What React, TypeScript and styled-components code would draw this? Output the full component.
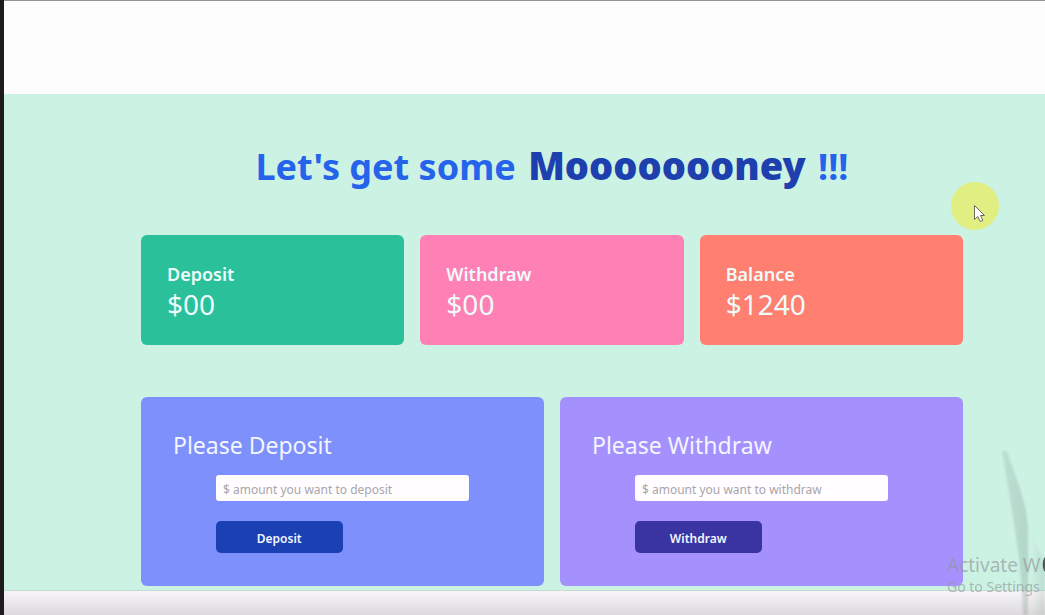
import React, { useState } from "react";
import styled, { createGlobalStyle } from "styled-components";

const GlobalStyle = createGlobalStyle`
  *, *::before, *::after { box-sizing: border-box; }
  body {
    margin: 0;
    font-family: "Noto Sans", "Open Sans", sans-serif;
    background: #fefdfe;
  }
`;

const Page = styled.div`
  position: relative;
  display: flex;
  flex-direction: column;
  min-height: 100vh;
  overflow: hidden;
  border-left: 4px solid #1c1c1c;
`;

const TopBar = styled.header`
  height: 94px;
  background: #fefdfe;
  border-top: 1px solid #959395;
`;

const Main = styled.main`
  padding: 45px 82px 4px 137px;
  background: #ccf2e4;
`;

const Title = styled.h1`
  height: 52px;
  margin: 0;
  font-size: 36px;
  line-height: 52px;
  font-weight: 700;
  text-align: center;
  white-space: nowrap;
  color: #2563eb;
`;

const Strong = styled.span`
  margin: 0 3px;
  font-size: 38px;
  font-weight: 900;
  color: #1e40af;
`;

const Cards = styled.section`
  display: grid;
  grid-template-columns: repeat(3, 1fr);
  gap: 16px;
  margin-top: 44px;
`;

const Card = styled.article<{ $color: string }>`
  height: 110px;
  padding: 25px 26px;
  border-radius: 6px;
  background: ${(p) => p.$color};
  color: #effbfb;
`;

const CardLabel = styled.h2`
  margin: 0;
  font-size: 18px;
  line-height: 28px;
  font-weight: 600;
`;

const CardValue = styled.p`
  margin: 0;
  font-size: 28px;
  line-height: 32px;
  font-weight: 400;
`;

const Panels = styled.section`
  display: grid;
  grid-template-columns: repeat(2, 1fr);
  gap: 16px;
  margin-top: 52px;
`;

const Panel = styled.article<{ $color: string }>`
  height: 189px;
  padding: 32px;
  border-radius: 6px;
  background: ${(p) => p.$color};
`;

const PanelTitle = styled.h2`
  margin: 0;
  font-size: 23px;
  line-height: 32px;
  font-weight: 400;
  color: #f3f5ff;
`;

const Form = styled.form`
  display: flex;
  flex-direction: column;
  align-items: flex-start;
  gap: 20px;
  margin: 14px 43px 0;
`;

const Amount = styled.input`
  width: 100%;
  height: 26px;
  padding: 2px 7px 0;
  border: 0;
  border-radius: 3px;
  background: #fffdff;
  font: 400 12px/20px "Noto Sans", sans-serif;
  color: #333;

  &::placeholder {
    color: #a9a5a9;
    opacity: 1;
  }
`;

const Submit = styled.button<{ $color: string }>`
  width: 50%;
  height: 32px;
  padding: 3px 0 0;
  border: 0;
  border-radius: 5px;
  background: ${(p) => p.$color};
  font: 600 12px/20px "Noto Sans", sans-serif;
  color: #f3f7ff;
  cursor: pointer;
`;

const Footer = styled.footer`
  flex: 1;
  min-height: 25px;
  border-top: 1px solid #c3dcd2;
  background: linear-gradient(#f7f5f7, #dbd9db);
`;

const Pointer = styled.svg`
  position: absolute;
  top: 181px;
  right: 45px;
  width: 50px;
  height: 50px;
  pointer-events: none;
`;

const Curve = styled.svg`
  position: absolute;
  right: 0;
  bottom: 0;
  width: 50px;
  height: 165px;
  pointer-events: none;
`;

const Watermark = styled.aside`
  position: absolute;
  right: 0;
  bottom: 18px;
  width: 98px;
  overflow: hidden;
  white-space: nowrap;
  color: rgba(145, 150, 150, 0.65);
  pointer-events: none;
`;

const WatermarkTitle = styled.div`
  font-size: 19px;
  line-height: 24px;
`;

const WatermarkText = styled.div`
  font-size: 14px;
  line-height: 20px;
`;

type TransferProps = {
  id: string;
  name: string;
  color: string;
  buttonColor: string;
  onTransfer: (amount: number) => void;
};

function Transfer({ id, name, color, buttonColor, onTransfer }: TransferProps) {
  const [value, setValue] = useState("");
  const submit = (e: React.FormEvent) => {
    e.preventDefault();
    const amount = Number(value);
    if (amount > 0) onTransfer(amount);
    setValue("");
  };
  return (
    <Panel $color={color}>
      <PanelTitle>
        <label htmlFor={id}>Please {name}</label>
      </PanelTitle>
      <Form onSubmit={submit}>
        <Amount
          id={id}
          type="text"
          inputMode="decimal"
          placeholder={`$ amount you want to ${name.toLowerCase()}`}
          value={value}
          onChange={(e) => setValue(e.target.value)}
        />
        <Submit type="submit" $color={buttonColor}>{name}</Submit>
      </Form>
    </Panel>
  );
}

export default function App() {
  const [deposit, setDeposit] = useState(0);
  const [withdraw, setWithdraw] = useState(0);
  const cards = [
    { label: "Deposit", value: deposit || "00", color: "#29c09a" },
    { label: "Withdraw", value: withdraw || "00", color: "#ff80b5" },
    { label: "Balance", value: 1240 + deposit - withdraw, color: "#ff7f70" },
  ];

  return (
    <>
      <GlobalStyle />
      <Page>
        <TopBar />
        <Main>
          <Title>
            Let's get some <Strong>Moooooooney</Strong> !!!
          </Title>
          <Cards>
            {cards.map((c) => (
              <Card key={c.label} $color={c.color}>
                <CardLabel>{c.label}</CardLabel>
                <CardValue>${c.value}</CardValue>
              </Card>
            ))}
          </Cards>
          <Panels>
            <Transfer
              id="deposit-amount"
              name="Deposit"
              color="#7e90fc"
              buttonColor="#1a40b4"
              onTransfer={(n) => setDeposit(deposit + n)}
            />
            <Transfer
              id="withdraw-amount"
              name="Withdraw"
              color="#a591fe"
              buttonColor="#3a34a3"
              onTransfer={(n) => setWithdraw(withdraw + n)}
            />
          </Panels>
        </Main>
        <Footer />
        <Pointer viewBox="0 0 50 50" aria-hidden="true">
          <circle cx="25" cy="25" r="24" fill="#e0ee82" />
          <path
            d="M24.500 24.500V38.500L27.800 35.500L30.200 40.500L32.800 39.300L30.500 34.500H34.500Z"
            fill="#fff"
            stroke="#6c6b55"
            strokeWidth="1"
            strokeLinejoin="round"
          />
        </Pointer>
        <Curve viewBox="0 0 50 165" aria-hidden="true">
          <defs>
            <linearGradient id="curve" x1="0" x2="1" y1="0" y2="0">
              <stop offset="0" stopColor="#789487" stopOpacity="0.2" />
              <stop offset="1" stopColor="#789487" stopOpacity="0.3" />
            </linearGradient>
            <linearGradient id="edge" x1="0" x2="1" y1="0" y2="0">
              <stop offset="0" stopColor="#789487" stopOpacity="0" />
              <stop offset="1" stopColor="#789487" stopOpacity="0.2" />
            </linearGradient>
            <filter id="soft" x="-20%" y="-5%" width="140%" height="110%">
              <feGaussianBlur stdDeviation="1" />
            </filter>
          </defs>
          <g filter="url(#soft)">
            <path d="M7 1H12C19 24 31 48 33 78V165H28C27 112 18 67 7 1Z" fill="url(#curve)" />
            <path d="M36 85L50 112V165H38Z" fill="url(#edge)" />
          </g>
          <path d="M50 107C47 110 47 119 50 122Z" fill="#4c5350" />
        </Curve>
        <Watermark>
          <WatermarkTitle>Activate W</WatermarkTitle>
          <WatermarkText>Go to Settings</WatermarkText>
        </Watermark>
      </Page>
    </>
  );
}
